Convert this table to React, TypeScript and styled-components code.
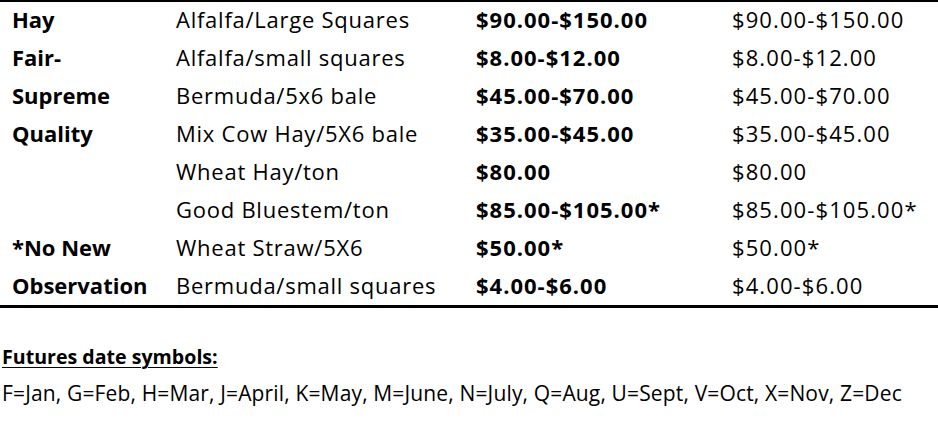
import React from "react";
import styled, { createGlobalStyle } from "styled-components";

const Global = createGlobalStyle`
  html, body { margin: 0; padding: 0; background: #fff; }
  body { font-family: "Open Sans", Lato, sans-serif; color: #000; }
`;

const Page = styled.div`
  width: 938px;
  height: 432px;
  display: flex;
  flex-direction: column;
`;

const Table = styled.div`
  border-top: 2px solid #000;
  border-bottom: 3px solid #000;
  display: grid;
  grid-template-columns: 164px 300px 256px 1fr;
  grid-auto-rows: 37.875px;
  padding-left: 12px;
`;

const Cell = styled.div<{ $bold?: boolean; $spacing?: number }>`
  display: flex;
  align-items: center;
  padding-bottom: 3px;
  font-size: 22px;
  font-weight: ${(p) => (p.$bold ? 700 : 400)};
  letter-spacing: ${(p) => p.$spacing ?? 0}px;
  white-space: nowrap;
`;

const Footer = styled.div`
  padding: 35px 0 0 2px;
  display: flex;
  flex-direction: column;
  gap: 9px;
`;

const Heading = styled.div`
  font-size: 19.6px;
  font-weight: 700;
  text-decoration: underline;
  text-decoration-thickness: 1px;
  text-underline-offset: 3px;
`;

const Line = styled.div`
  font-size: 21px;
  letter-spacing: 0.15px;
  white-space: nowrap;
`;

const rows: [string, string, string][] = [
  ["Hay", "Alfalfa/Large Squares", "$90.00-$150.00"],
  ["Fair-", "Alfalfa/small squares", "$8.00-$12.00"],
  ["Supreme", "Bermuda/5x6 bale", "$45.00-$70.00"],
  ["Quality", "Mix Cow Hay/5X6 bale", "$35.00-$45.00"],
  ["", "Wheat Hay/ton", "$80.00"],
  ["", "Good Bluestem/ton", "$85.00-$105.00*"],
  ["*No New", "Wheat Straw/5X6", "$50.00*"],
  ["Observation", "Bermuda/small squares", "$4.00-$6.00"],
];

export default function App() {
  return (
    <Page>
      <Global />
      <Table>
        {rows.map(([a, b, c], i) => (
          <React.Fragment key={i}>
            <Cell $bold>{a}</Cell>
            <Cell $spacing={0.75}>{b}</Cell>
            <Cell $bold $spacing={1}>{c}</Cell>
            <Cell $spacing={1.1}>{c}</Cell>
          </React.Fragment>
        ))}
      </Table>
      <Footer>
        <Heading>Futures date symbols:</Heading>
        <Line>
          F=Jan, G=Feb, H=Mar, J=April, K=May, M=June, N=July, Q=Aug, U=Sept, V=Oct, X=Nov, Z=Dec
        </Line>
      </Footer>
    </Page>
  );
}
